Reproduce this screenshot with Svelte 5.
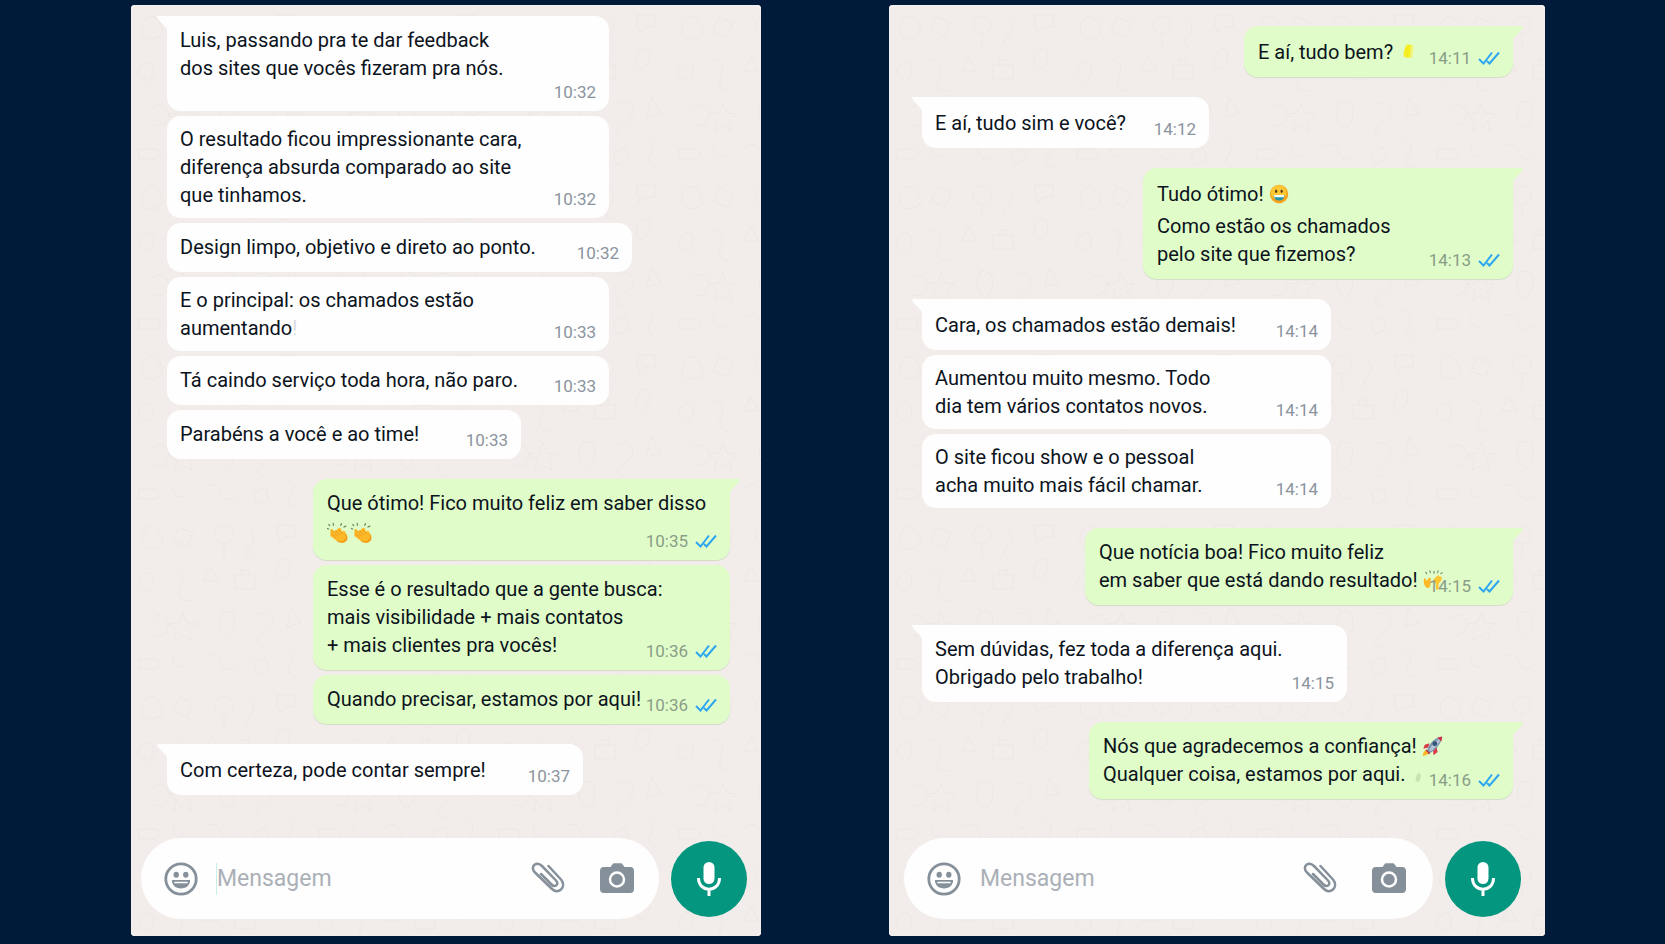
<script>
    // Each line is a list of parts: plain strings, or { emoji } / { faint } pieces
    const chats = [
        {
            id: "left",
            label: "Conversa com Luis",
            caret: true,
            groups: [
                {
                    from: "them",
                    messages: [
                        {
                            width: 442,
                            time: "10:32",
                            stacked: true,
                            lines: [["Luis, passando pra te dar feedback"], ["dos sites que vocês fizeram pra nós."]]
                        },
                        {
                            width: 442,
                            time: "10:32",
                            lines: [["O resultado ficou impressionante cara,"], ["diferença absurda comparado ao site"], ["que tinhamos."]]
                        },
                        { width: 465, time: "10:32", lines: [["Design limpo, objetivo e direto ao ponto."]] },
                        {
                            width: 442,
                            time: "10:33",
                            lines: [["E o principal: os chamados estão"], ["aumentando", { faint: "!" }]]
                        },
                        { width: 442, time: "10:33", lines: [["Tá caindo serviço toda hora, não paro."]] },
                        { width: 354, time: "10:33", lines: [["Parabéns a você e ao time!"]] }
                    ]
                },
                {
                    from: "me",
                    messages: [
                        {
                            width: 417,
                            time: "10:35",
                            lines: [["Que ótimo! Fico muito feliz em saber disso"], [{ emoji: "clap" }, { emoji: "clap" }]]
                        },
                        {
                            width: 417,
                            time: "10:36",
                            lines: [["Esse é o resultado que a gente busca:"], ["mais visibilidade + mais contatos"], ["+ mais clientes pra vocês!"]]
                        },
                        { width: 417, time: "10:36", lines: [["Quando precisar, estamos por aqui!"]] }
                    ]
                },
                {
                    from: "them",
                    messages: [{ width: 416, time: "10:37", lines: [["Com certeza, pode contar sempre!"]] }]
                }
            ]
        },
        {
            id: "right",
            label: "Conversa sobre os chamados",
            caret: false,
            groups: [
                {
                    from: "me",
                    messages: [{ width: 269, time: "14:11", lines: [["E aí, tudo bem? ", { emoji: "smudge" }]] }]
                },
                {
                    from: "them",
                    messages: [{ width: 287, time: "14:12", lines: [["E aí, tudo sim e você?"]] }]
                },
                {
                    from: "me",
                    messages: [
                        {
                            width: 370,
                            time: "14:13",
                            tallFirst: true,
                            lines: [["Tudo ótimo! ", { emoji: "grin" }], ["Como estão os chamados"], ["pelo site que fizemos?"]]
                        }
                    ]
                },
                {
                    from: "them",
                    messages: [
                        { width: 409, time: "14:14", lines: [["Cara, os chamados estão demais!"]] },
                        { width: 409, time: "14:14", lines: [["Aumentou muito mesmo. Todo"], ["dia tem vários contatos novos."]] },
                        { width: 409, time: "14:14", lines: [["O site ficou show e o pessoal"], ["acha muito mais fácil chamar."]] }
                    ]
                },
                {
                    from: "me",
                    messages: [
                        {
                            width: 428,
                            time: "14:15",
                            lines: [["Que notícia boa! Fico muito feliz"], ["em saber que está dando resultado! ", { emoji: "hands" }]]
                        }
                    ]
                },
                {
                    from: "them",
                    messages: [
                        { width: 425, time: "14:15", lines: [["Sem dúvidas, fez toda a diferença aqui."], ["Obrigado pelo trabalho!"]] }
                    ]
                },
                {
                    from: "me",
                    messages: [
                        {
                            width: 424,
                            time: "14:16",
                            lines: [["Nós que agradecemos a confiança! ", { emoji: "rocket" }], ["Qualquer coisa, estamos por aqui. ", { emoji: "speck" }]]
                        }
                    ]
                }
            ]
        }
    ];

    const isTall = (message, i) =>
        (message.tallFirst && i === 0) || message.lines[i].every((part) => part.emoji);
</script>

{#snippet emoji(name)}
    {#if name === "clap"}
        <svg class="emoji" viewBox="0 0 24 24" role="img" aria-label="palmas">
            <path d="M3.500 8.500 Q4.500 6.500 6.500 8.500 L8 10 L13 6.500 Q15.500 5.500 15.500 8.500 L16.500 11 Q17.500 8.500 19 9.500 L22 15 Q23.500 20 19.500 22 Q15 24 10.500 20.500 L4 15.500 Q2.500 13.500 4 13 Z" fill="#fdb928" />
            <path d="M4.500 12.500 L10 17 M6 10 L12 15.500 M9 9.500 L14 14 M13 8 L17 13" stroke="#e99a1d" stroke-width="1" fill="none" stroke-linecap="round" />
            <path d="M11 20.500 Q16 23.500 19.500 20.500 Q22.500 18 20.500 13.500" stroke="#ef961c" stroke-width="1.200" fill="none" />
            <path d="M3 4 L2 2.800 M7 3.500 L6.800 1.500 M15 3.500 L15.800 1.800 M18.500 5.500 L20.500 4.500 M1.500 7.500 L.500 7" stroke="#66805f" stroke-width="1.300" stroke-linecap="round" />
        </svg>
    {:else if name === "grin"}
        <svg class="emoji" viewBox="0 0 24 24" role="img" aria-label="sorriso">
            <circle cx="11" cy="12" r="10" fill="#f6a21c" />
            <ellipse cx="10.500" cy="10.500" rx="8.500" ry="8" fill="#ffc936" />
            <ellipse cx="7.800" cy="9" rx="1.200" ry="2" fill="#5c3b16" />
            <ellipse cx="13.800" cy="9" rx="1.200" ry="2" fill="#5c3b16" />
            <path d="M5 13 H17 Q16.500 19 11 19 Q5.500 19 5 13 Z" fill="#2696a3" />
            <path d="M5.500 13 H16.500 L16 15.500 H6 Z" fill="#fff" />
        </svg>
    {:else if name === "hands"}
        <svg class="emoji" viewBox="0 0 24 24" role="img" aria-label="mãos para cima">
            <path d="M1 11 Q1.500 9 3 11 L4 13 L6.500 9.500 Q9 9 8.500 12 L8 18 Q7 21.500 4 20.500 Q0 18 1 11 Z" fill="#fcb824" />
            <path d="M12 11 L16 7 Q17.500 6 17.500 8 L20 8.500 Q21.500 10 19.500 13 L17 16 L17 23 L14 22 L14 16 Q10.500 14 12 11 Z" fill="#ffc533" />
            <path d="M4 5 L3 3.500 M8 4 L7.500 2 M12 4.500 V2.500 M16 4 L16.500 2 M19.500 5 L21 4" stroke="#72866b" stroke-width="1.200" stroke-linecap="round" />
        </svg>
    {:else if name === "rocket"}
        <svg class="emoji" viewBox="0 0 24 24" role="img" aria-label="foguete">
            <path d="M8 9 L3 10.500 L1.500 15 L7 13.500 Z M12 16 L12.500 22 L17 18.500 L16 13 Z" fill="#d83b4d" />
            <path d="M5 18 Q8 8 15 4 Q19 1.500 22 2 Q22 6 19 10 Q14 17 8 20 Z" fill="#7f97b0" />
            <path d="M8 16 Q12 8 21 3 Q18 12 9 18 Z" fill="#b3c4d2" />
            <path d="M17 3 Q20 1.500 22 2 Q22 5 21 7 Z" fill="#cf3042" />
            <circle cx="14" cy="9.500" r="2.600" fill="#345478" />
            <path d="M4.500 15.500 L9 20 L7 21 L3.500 18 Z" fill="#be2842" />
            <path d="M4 17 Q1 18 1 23 Q5 23 7 20 Z" fill="#ffb51f" />
        </svg>
    {:else if name === "speck"}
        <svg class="emoji" viewBox="0 0 24 24" aria-hidden="true">
            <ellipse cx="9" cy="16" rx="2.500" ry="5" fill="#c7e4b3" transform="rotate(15 9 16)" />
        </svg>
    {:else}
        <svg class="emoji" viewBox="0 0 24 24" aria-hidden="true">
            <path d="M9 4 H15 L16 8 L15 18 H8 Q5 16 7 10 Z" fill="#f4ee20" />
            <path d="M14 4 L17 5 L16 16 L13 18 Z" fill="#f2f57a" />
        </svg>
    {/if}
{/snippet}

<main class="page">
    {#each chats as chat}
        <section class="chat {chat.id}" aria-label={chat.label}>
            <svg class="doodles" aria-hidden="true">
                <defs>
                    <pattern id="doodle-{chat.id}" width="180" height="170" patternUnits="userSpaceOnUse">
                        <path d="M12 18 q8 -14 17 0 q8 14 -8 16 q-14 0 -9 -16 M48 12 l14 6 l-6 14 l-14 -6 z M84 20 a9 9 0 1 1 18 0 a9 9 0 1 1 -18 0 M93 29 v14 M118 14 q10 8 0 18 q-8 8 4 12 M146 10 h18 v12 h-10 l-6 6 v-6 h-2 z" />
                        <path d="M10 62 c10 -12 18 4 8 14 c-8 -2 -14 -6 -8 -14 M42 54 q14 4 8 18 t10 14 M72 66 l8 -14 l8 14 z M104 60 h20 v14 h-20 z M110 60 v-5 h8 v5 M146 52 a6 10 20 1 1 12 4 a6 10 20 1 1 -12 -4" />
                        <path d="M20 104 q12 -10 18 4 q-2 16 -14 12 M52 98 l4 10 l10 1 l-8 7 l3 10 l-9 -6 l-9 6 l3 -10 l-8 -7 l10 -1 z M92 96 q-10 16 4 28 q12 -10 6 -26 z M126 100 c14 -8 22 8 10 16 s-14 14 0 16 M160 92 l10 16 l-14 4 z" />
                        <path d="M8 144 h16 a5 5 0 0 1 0 10 h-16 z M44 140 a7 7 0 1 0 10 10 M74 142 q12 -8 16 6 q4 12 16 2 M122 148 l12 -6 l4 12 l-12 6 z M154 134 q14 6 4 18 q-4 8 8 10" />
                    </pattern>
                </defs>
                <rect width="100%" height="100%" fill="url(#doodle-{chat.id})" />
            </svg>

            <div class="messages">
                {#each chat.groups as group}
                    <div class="group {group.from}">
                        {#each group.messages as message, m}
                            <article
                                class="bubble"
                                class:tail={m === 0}
                                class:multi={message.lines.length > 1}
                                class:stacked={message.stacked}
                                style:width="{message.width}px"
                            >
                                <div class="text">
                                    {#each message.lines as line, i}
                                        <div class="line" class:tall={isTall(message, i)}>
                                            {#each line as part}{#if part.emoji}{@render emoji(part.emoji)}{:else if part.faint}<span class="faint">{part.faint}</span>{:else}{part}{/if}{/each}
                                        </div>
                                    {/each}
                                </div>
                                <div class="meta">
                                    <time>{message.time}</time>
                                    {#if group.from === "me"}
                                        <svg class="ticks" viewBox="0 0 22 14" role="img" aria-label="lida">
                                            <path d="M1 8 L5.500 12.500 L14 1.500 M9 10 L11.500 12.500 L21 1.500" />
                                        </svg>
                                    {/if}
                                </div>
                            </article>
                        {/each}
                    </div>
                {/each}
            </div>

            <form class="composer" onsubmit={(e) => e.preventDefault()}>
                <div class="field">
                    <button type="button" class="icon" aria-label="Emojis">
                        <svg viewBox="0 0 34 34">
                            <circle cx="17" cy="17" r="15.200" fill="none" stroke="currentColor" stroke-width="2.800" />
                            <ellipse cx="12.200" cy="12.800" rx="2.700" ry="3" fill="currentColor" />
                            <ellipse cx="21.800" cy="12.800" rx="2.700" ry="3" fill="currentColor" />
                            <path d="M8.500 18 H25.500 Q26.500 18 26 20 Q24 26.500 17 26.500 Q10 26.500 8 20 Q7.500 18 8.500 18 Z" fill="currentColor" />
                            <path d="M11 20.500 H23" stroke="#fff" stroke-width="1.600" stroke-linecap="round" />
                        </svg>
                    </button>
                    <input class:caret={chat.caret} type="text" placeholder="Mensagem" aria-label="Mensagem" />
                    <button type="button" class="icon" aria-label="Anexar">
                        <svg viewBox="0 0 34 34">
                            <path d="M17.500 4 L30 17.500 C33 21 32.500 25 30 27.500 C27 30 23.500 29.500 20.500 26.500 L4 10.500 C1 7.500 1.500 4.500 3.500 2.800 C6 1 8.500 1.500 11 4 L25 18.500 C27 20.500 26.500 22.500 25 23.500 C23.500 24.500 22 24 20.500 22.500 L10 12" fill="none" stroke="currentColor" stroke-width="2.500" stroke-linecap="round" stroke-linejoin="round" />
                        </svg>
                    </button>
                    <button type="button" class="icon" aria-label="Câmera">
                        <svg viewBox="0 0 34 34">
                            <path d="M4 5 H10.500 L12.500 2.200 Q13 1.200 14 1.200 H21 Q22 1.200 22.500 2.200 L24.500 5 H30 Q34 5 34 9 V27 Q34 31 30 31 H4 Q0 31 0 27 V9 Q0 5 4 5 Z" fill="currentColor" />
                            <circle cx="17" cy="17.500" r="7" fill="none" stroke="#fff" stroke-width="2.500" />
                        </svg>
                    </button>
                </div>
                <button type="button" class="mic" aria-label="Gravar áudio">
                    <svg viewBox="0 0 24 34">
                        <rect x="6.500" y="0" width="11" height="22" rx="5.500" fill="#fff" />
                        <path d="M1.500 16 C1.500 31 22.500 31 22.500 16 M12 27 V34" fill="none" stroke="#fff" stroke-width="3" />
                    </svg>
                </button>
            </form>
        </section>
    {/each}
</main>

<style>
    :global(body) {
        background: #001a3a;
    }

    .page {
        box-sizing: border-box;
        min-height: 100vh;
        display: grid;
        grid-template-columns: minmax(0, 630fr) minmax(0, 656fr);
        gap: 128px;
        padding: 5px 120px 8px 131px;
        font-family: Roboto, "Noto Sans", sans-serif;
        color: #0c131c;
    }

    .chat {
        position: relative;
        display: flex;
        flex-direction: column;
        background: #f2edea;
        border-radius: 4px;
        box-shadow: inset 0 0 0 1px #faf8f6;
        overflow: hidden;
    }

    .left {
        --pad-start: 36px;
        --pad-end: 31px;
    }

    .right {
        --pad-start: 33px;
        --pad-end: 32px;
    }

    .doodles {
        position: absolute;
        inset: 0;
        width: 100%;
        height: 100%;
        fill: none;
        stroke: #ede7e3;
        stroke-width: 1;
    }

    /* === MESSAGES === */
    .messages {
        position: relative;
        flex: 1;
        display: flex;
        flex-direction: column;
        gap: 20px;
        padding: 11px var(--pad-end) 20px var(--pad-start);
    }

    .right .messages {
        padding-top: 21px;
    }

    .group {
        display: flex;
        flex-direction: column;
        align-items: flex-start;
        gap: 5px;
    }

    .group.me {
        align-items: flex-end;
    }

    .bubble {
        position: relative;
        box-sizing: border-box;
        max-width: 100%;
        display: flex;
        align-items: flex-end;
        padding: 10px 13px 9px;
        border-radius: 14px;
        background: #fefefe;
    }

    .me .bubble {
        padding-left: 14px;
        background: #e0fdc9;
        box-shadow: 0 1px 1px #d3dcc8;
    }

    .them .multi {
        padding-top: 9px;
    }

    .bubble.tail {
        padding-top: 12px;
    }

    .bubble.multi.tail {
        padding-top: 10px;
    }

    .them .tail {
        border-top-left-radius: 0;
    }

    .me .tail {
        border-top-right-radius: 0;
    }

    .tail::before {
        content: "";
        position: absolute;
        top: 0;
        width: 11px;
        height: 15px;
        background: inherit;
    }

    .them .tail::before {
        left: -10px;
        clip-path: polygon(0 0, 100% 0, 100% 100%, 80% 75%, 8% 20%);
    }

    .me .tail::before {
        right: -10px;
        clip-path: polygon(0 0, 100% 0, 92% 20%, 20% 75%, 0 100%);
    }

    .text {
        flex: 1;
        min-width: 0;
        padding-bottom: 2px;
        font-size: 20px;
        line-height: 28px;
        white-space: nowrap;
    }

    .them .multi .text {
        padding-bottom: 0;
    }

    .bubble.tail .text {
        padding-bottom: 2px;
    }

    .line {
        height: 28px;
    }

    .line.tall {
        height: 32px;
        line-height: 32px;
    }

    .line.tall:first-child {
        margin-bottom: 2px;
    }

    .faint {
        color: #d9dce0;
    }

    .emoji {
        width: 22px;
        height: 22px;
        margin-right: 2px;
        vertical-align: -4px;
    }

    .meta {
        position: relative;
        display: flex;
        align-items: center;
        gap: 7px;
        font-size: 17px;
        line-height: 20px;
        color: #8b949d;
    }

    .me .meta {
        color: #8a9c88;
    }

    .ticks {
        width: 22px;
        height: 14px;
        fill: none;
        stroke: #2ca6f0;
        stroke-width: 2;
    }

    .bubble.stacked {
        flex-direction: column;
        align-items: stretch;
    }

    .stacked .meta {
        align-self: flex-end;
    }

    .bubble.stacked .text {
        padding-bottom: 0;
    }

    /* === COMPOSER === */
    .composer {
        position: relative;
        display: flex;
        align-items: center;
        gap: 12px;
        padding: 0 14px 17px 10px;
    }

    .right .composer {
        padding: 0 24px 17px 15px;
    }

    .field {
        flex: 1;
        min-width: 0;
        height: 81px;
        display: flex;
        align-items: center;
        box-sizing: border-box;
        padding: 0 25px 0 23px;
        border-radius: 41px;
        background: #fefefe;
    }

    .right .field {
        padding-right: 27px;
    }

    button {
        border: 0;
        padding: 0;
        background: none;
        cursor: pointer;
    }

    .icon {
        flex: none;
        width: 34px;
        height: 34px;
        color: #85909a;
    }

    .icon + .icon {
        margin-left: 35px;
    }

    .icon svg {
        display: block;
        width: 34px;
        height: 34px;
    }

    input {
        flex: 1;
        min-width: 0;
        height: 32px;
        margin: 0 18px;
        padding: 0;
        border: 0;
        border-left: 1px solid transparent;
        outline: none;
        background: none;
        font-family: inherit;
        font-size: 23px;
        color: #0c131c;
    }

    input.caret {
        border-left-color: #c9f0e6;
    }

    input::placeholder {
        color: #abb0b7;
        opacity: 1;
    }

    .mic {
        flex: none;
        width: 76px;
        height: 76px;
        display: grid;
        place-items: center;
        border-radius: 50%;
        background: #04967f;
    }

    .mic svg {
        width: 24px;
        height: 34px;
    }
</style>
